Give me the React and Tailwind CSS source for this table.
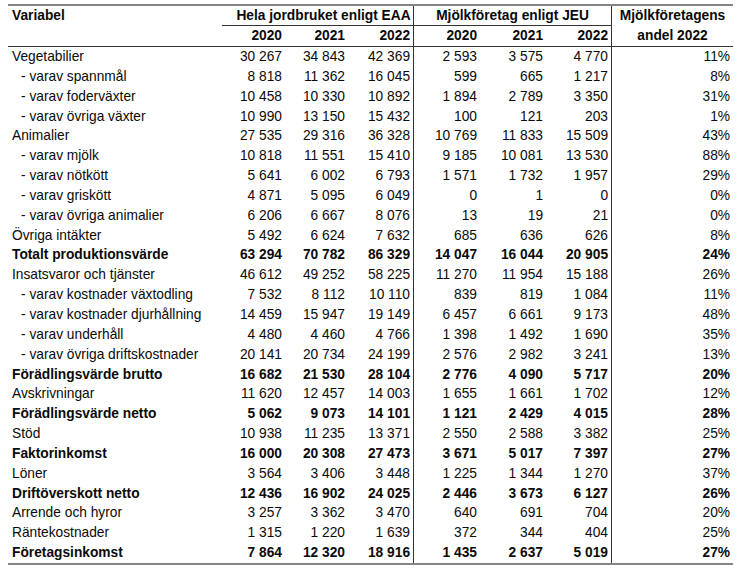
import React from "react";

const rows = [
  ["Vegetabilier", 0, 0, "30 267", "34 843", "42 369", "2 593", "3 575", "4 770", "11%"],
  ["- varav spannmål", 1, 0, "8 818", "11 362", "16 045", "599", "665", "1 217", "8%"],
  ["- varav foderväxter", 1, 0, "10 458", "10 330", "10 892", "1 894", "2 789", "3 350", "31%"],
  ["- varav övriga växter", 1, 0, "10 990", "13 150", "15 432", "100", "121", "203", "1%"],
  ["Animalier", 0, 0, "27 535", "29 316", "36 328", "10 769", "11 833", "15 509", "43%"],
  ["- varav mjölk", 1, 0, "10 818", "11 551", "15 410", "9 185", "10 081", "13 530", "88%"],
  ["- varav nötkött", 1, 0, "5 641", "6 002", "6 793", "1 571", "1 732", "1 957", "29%"],
  ["- varav griskött", 1, 0, "4 871", "5 095", "6 049", "0", "1", "0", "0%"],
  ["- varav övriga animalier", 1, 0, "6 206", "6 667", "8 076", "13", "19", "21", "0%"],
  ["Övriga intäkter", 0, 0, "5 492", "6 624", "7 632", "685", "636", "626", "8%"],
  ["Totalt produktionsvärde", 0, 1, "63 294", "70 782", "86 329", "14 047", "16 044", "20 905", "24%"],
  ["Insatsvaror och tjänster", 0, 0, "46 612", "49 252", "58 225", "11 270", "11 954", "15 188", "26%"],
  ["- varav kostnader växtodling", 1, 0, "7 532", "8 112", "10 110", "839", "819", "1 084", "11%"],
  ["- varav kostnader djurhållning", 1, 0, "14 459", "15 947", "19 149", "6 457", "6 661", "9 173", "48%"],
  ["- varav underhåll", 1, 0, "4 480", "4 460", "4 766", "1 398", "1 492", "1 690", "35%"],
  ["- varav övriga driftskostnader", 1, 0, "20 141", "20 734", "24 199", "2 576", "2 982", "3 241", "13%"],
  ["Förädlingsvärde brutto", 0, 1, "16 682", "21 530", "28 104", "2 776", "4 090", "5 717", "20%"],
  ["Avskrivningar", 0, 0, "11 620", "12 457", "14 003", "1 655", "1 661", "1 702", "12%"],
  ["Förädlingsvärde netto", 0, 1, "5 062", "9 073", "14 101", "1 121", "2 429", "4 015", "28%"],
  ["Stöd", 0, 0, "10 938", "11 235", "13 371", "2 550", "2 588", "3 382", "25%"],
  ["Faktorinkomst", 0, 1, "16 000", "20 308", "27 473", "3 671", "5 017", "7 397", "27%"],
  ["Löner", 0, 0, "3 564", "3 406", "3 448", "1 225", "1 344", "1 270", "37%"],
  ["Driftöverskott netto", 0, 1, "12 436", "16 902", "24 025", "2 446", "3 673", "6 127", "26%"],
  ["Arrende och hyror", 0, 0, "3 257", "3 362", "3 470", "640", "691", "704", "20%"],
  ["Räntekostnader", 0, 0, "1 315", "1 220", "1 639", "372", "344", "404", "25%"],
  ["Företagsinkomst", 0, 1, "7 864", "12 320", "18 916", "1 435", "2 637", "5 019", "27%"],
];

export default function App() {
  return (
    <div className="w-[740px] h-[565px] bg-white pt-[4px] pl-[8px] text-[13.75px] text-[#0a0a0a] font-['Liberation_Sans',Arial,sans-serif] leading-none">
      <div className="w-[725px] border-t-2 border-b-2 border-[#858585]">
        <table className="table-fixed border-separate border-spacing-0 w-[725px]">
          <colgroup>
            <col className="w-[214px]" />
            <col className="w-[63px]" />
            <col className="w-[63px]" />
            <col className="w-[66px]" />
            <col className="w-[66px]" />
            <col className="w-[66px]" />
            <col className="w-[66px]" />
            <col className="w-[121px]" />
          </colgroup>
          <thead>
            <tr className="h-[19px] font-bold">
              <td className="pl-[4px] text-left align-middle">Variabel</td>
              <td colSpan={3} className="pl-[12px] text-center border-r border-r-[#333] border-b border-b-[#333]">
                Hela jordbruket enligt EAA
              </td>
              <td colSpan={3} className="text-center border-r border-r-[#333] border-b border-b-[#333]">
                Mjölkföretag enligt JEU
              </td>
              <td rowSpan={2} className="text-center align-middle leading-[20px] border-b border-b-[#333]">
                Mjölkföretagens
                <br />
                andel 2022
              </td>
            </tr>
            <tr className="h-[20px] font-bold">
              <td className="border-b border-b-[#333]"></td>
              <td className="text-right pr-[3px] border-b border-b-[#333]">2020</td>
              <td className="text-right pr-[3px] border-b border-b-[#333]">2021</td>
              <td className="text-right pr-[3px] border-b border-b-[#333] border-r border-r-[#333]">2022</td>
              <td className="text-right pr-[3px] border-b border-b-[#333]">2020</td>
              <td className="text-right pr-[3px] border-b border-b-[#333]">2021</td>
              <td className="text-right pr-[3px] border-b border-b-[#333] border-r border-r-[#333]">2022</td>
            </tr>
          </thead>
          <tbody>
            {rows.map((r, i) => {
              const [label, indent, bold, ...vals] = r;
              return (
                <tr key={i} className={bold ? "h-[19.85px] font-bold" : "h-[19.85px]"}>
                  <td className={indent ? "pl-[13px] whitespace-nowrap" : "pl-[4px] whitespace-nowrap"}>{label}</td>
                  {vals.map((v, j) => (
                    <td
                      key={j}
                      className={
                        j === 2 || j === 5
                          ? "text-right pr-[3px] whitespace-nowrap border-r border-r-[#333]"
                          : "text-right pr-[3px] whitespace-nowrap"
                      }
                    >
                      {v.replace(/ /g, "\u00a0")}
                    </td>
                  ))}
                </tr>
              );
            })}
          </tbody>
        </table>
      </div>
    </div>
  );
}
